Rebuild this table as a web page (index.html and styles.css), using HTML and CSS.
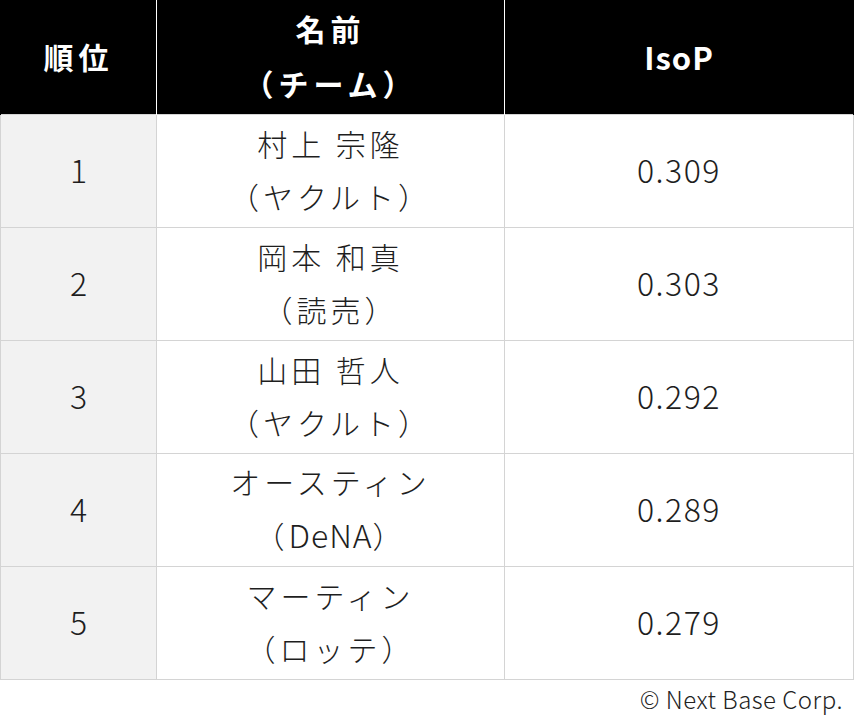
FILE: index.html
```html
<!DOCTYPE html>
<html lang="ja">
<head>
<meta charset="utf-8">
<link rel="stylesheet" href="styles.css">
</head>
<body>
<table class="rank">
  <colgroup>
    <col class="c-rank"><col class="c-name"><col class="c-val">
  </colgroup>
  <thead>
    <tr>
      <th>順位</th>
      <th><span class="line">名前</span><span class="line">（チーム）</span></th>
      <th class="latin">IsoP</th>
    </tr>
  </thead>
  <tbody>
    <tr><td class="num">1</td><td><span class="line">村上 宗隆</span><span class="line">（ヤクルト）</span></td><td class="val">0.309</td></tr>
    <tr><td class="num">2</td><td><span class="line">岡本 和真</span><span class="line">（読売）</span></td><td class="val">0.303</td></tr>
    <tr><td class="num">3</td><td><span class="line">山田 哲人</span><span class="line">（ヤクルト）</span></td><td class="val">0.292</td></tr>
    <tr><td class="num">4</td><td><span class="line">オースティン</span><span class="line">（<span class="dena">DeNA</span>）</span></td><td class="val">0.289</td></tr>
    <tr><td class="num">5</td><td><span class="line">マーティン</span><span class="line">（ロッテ）</span></td><td class="val">0.279</td></tr>
  </tbody>
</table>
<p class="credit">© Next Base Corp.</p>
</body>
</html>
```
FILE: styles.css
```css
html, body {
  margin: 0;
  padding: 0;
  background: #ffffff;
}
body {
  font-family: "Noto Sans CJK JP", "Noto Sans", sans-serif;
  color: #1a1a1a;
}
.rank {
  border-collapse: collapse;
  table-layout: fixed;
  width: 853px;
}
.c-rank { width: 156px; }
.c-name { width: 348px; }
.c-val { width: 349px; }
.rank th, .rank td {
  height: 109px;
  padding: 0 0 3px 0;
  text-align: center;
  vertical-align: middle;
  font-size: 30px;
  letter-spacing: 4px;
  line-height: 53px;
}
.rank th {
  background: #000;
  color: #fff;
  font-weight: 700;
  line-height: 55px;
  letter-spacing: 5px;
  border-left: 1px solid #fff;
  border-right: 1px solid #fff;
  border-top: 1px solid #000;
}
.rank th.latin {
  font-size: 31px;
  letter-spacing: 1px;
}
.rank th:first-child { border-left: 1px solid #000; }
.rank th:last-child { border-right: 1px solid #000; }
.rank td {
  border: 1px solid #d4d4d4;
  font-weight: 300;
  color: #1e1e1e;
}
.rank td.num {
  background: #f2f2f2;
  font-size: 32px;
  letter-spacing: 0;
}
.rank td.val {
  font-size: 32px;
  letter-spacing: 1.5px;
}
.dena {
  font-size: 32px;
  letter-spacing: 1px;
}
.line { display: block; }
.credit {
  margin: 0;
  width: 843px;
  text-align: right;
  font-family: "Noto Sans CJK JP", "Noto Sans", sans-serif;
  font-weight: 300;
  font-size: 24px;
  letter-spacing: 0.5px;
  line-height: 38px;
  color: #222;
}
```
